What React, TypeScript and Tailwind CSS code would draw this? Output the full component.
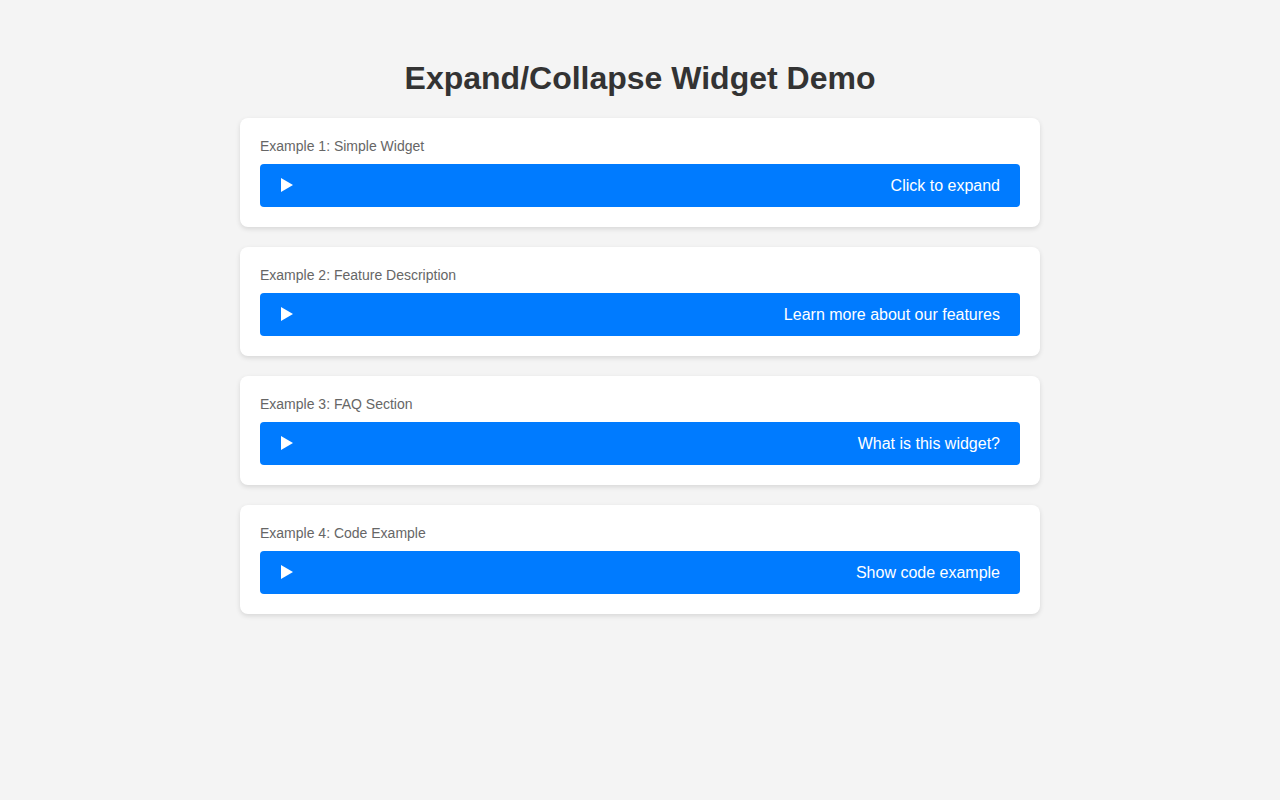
import React from 'react';

const examples = [
  { label: 'Example 1: Simple Widget', title: 'Click to expand' },
  { label: 'Example 2: Feature Description', title: 'Learn more about our features' },
  { label: 'Example 3: FAQ Section', title: 'What is this widget?' },
  { label: 'Example 4: Code Example', title: 'Show code example' },
];

const App: React.FC = () => {
  return (
    <div className="min-h-screen bg-[#f4f4f4] pt-[60px] font-['Liberation_Sans',Arial,sans-serif]">
      <div className="max-w-[800px] mx-auto">
        <h1 className="text-[32px] leading-[37px] font-bold text-[#333] text-center mb-[21px]">
          Expand/Collapse Widget Demo
        </h1>

        <div className="flex flex-col gap-5">
          {examples.map((ex, i) => (
            <div key={i} className="bg-white rounded-lg p-5 shadow-[0_2px_5px_rgba(0,0,0,0.12)]">
              <div className="text-[14px] leading-[16px] text-[#666] mb-[10px]">{ex.label}</div>
              <button className="w-full flex items-center justify-between bg-[#007bff] text-white rounded px-5 py-3 text-base leading-[19px]">
                <svg width="12" height="14" viewBox="0 0 12 14" className="ml-px -mt-0.5">
                  <polygon points="0,0 12,7 0,14" fill="white" />
                </svg>
                <span>{ex.title}</span>
              </button>
            </div>
          ))}
        </div>
      </div>
    </div>
  );
};

export default App;
